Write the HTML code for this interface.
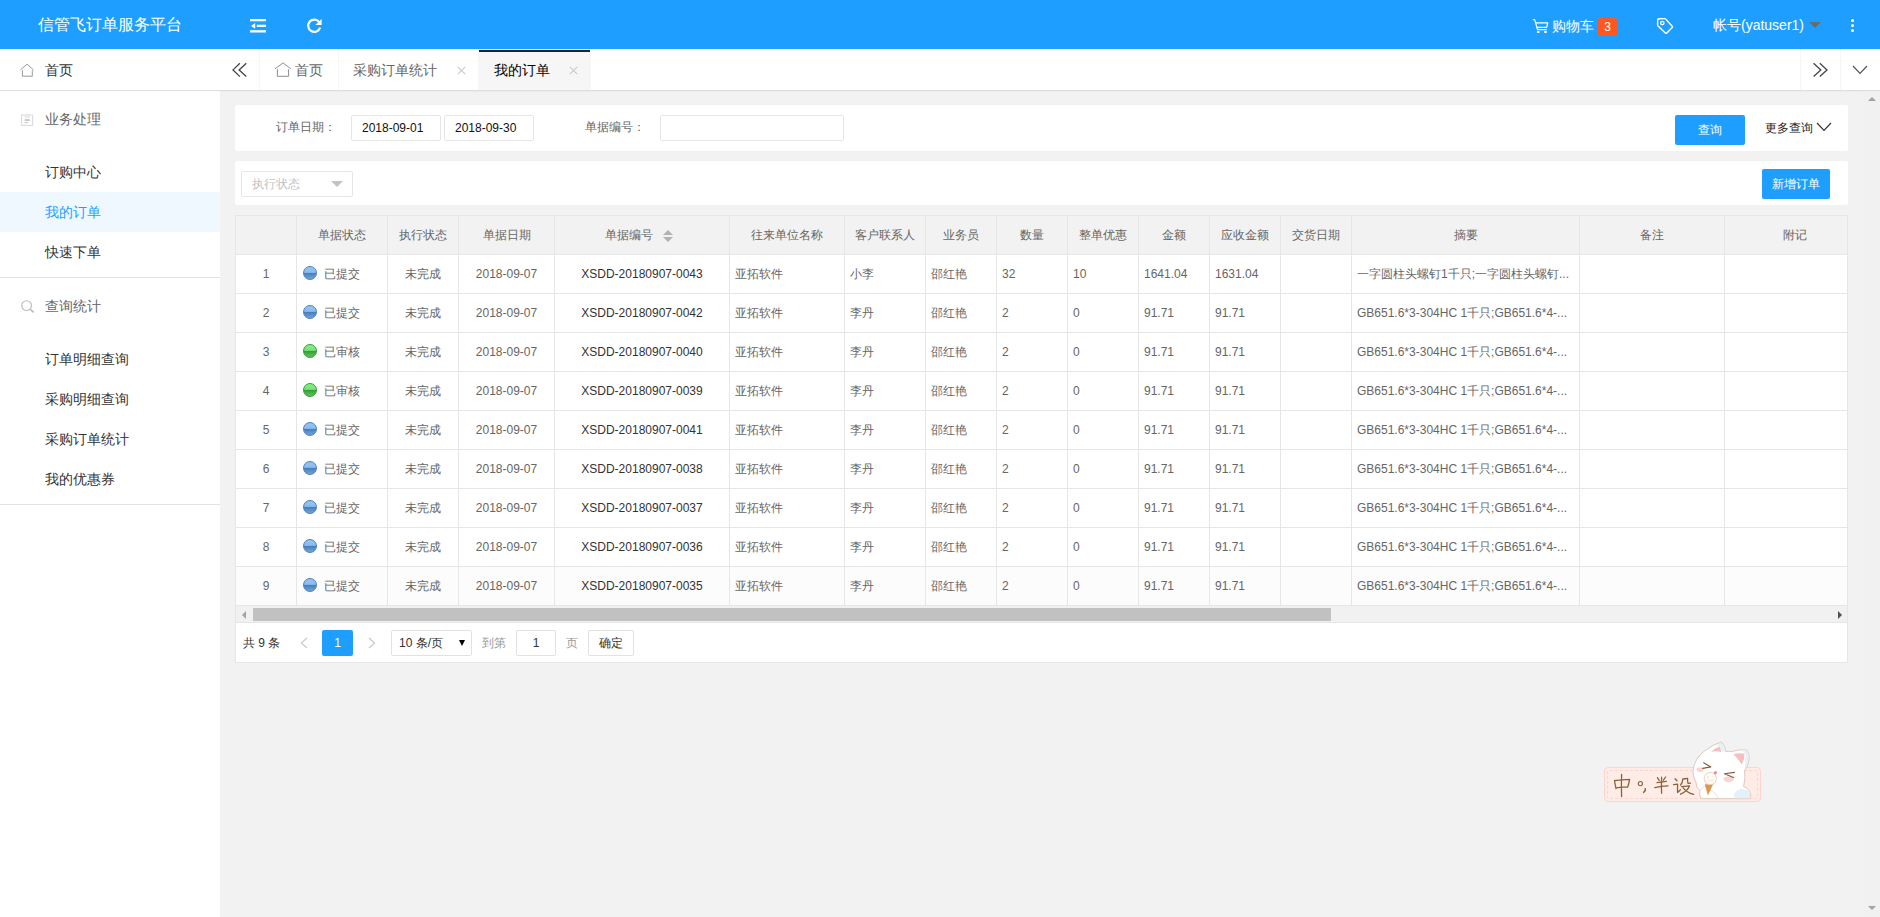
<!DOCTYPE html>
<html><head><meta charset="utf-8"><title>我的订单</title>
<style>
*{box-sizing:border-box;margin:0;padding:0}
html,body{width:1880px;height:917px;overflow:hidden;background:#f2f2f2;font-family:"Liberation Sans",sans-serif;font-size:14px;color:#333}
div,span,svg{position:absolute}
.t{white-space:nowrap}
#hdr{left:0;top:0;width:1880px;height:49px;background:#1E9FFF;color:#fff}
#side{left:0;top:49px;width:220px;height:868px;background:#fff}
#side .it{left:45px;font-size:14px;color:#333;white-space:nowrap;line-height:20px;height:20px}
#side .grp{color:#666}
#side .ln{left:0;width:220px;height:1px;background:#e2e2e2}
#tabs{left:220px;top:49px;width:1660px;height:41px;background:#fff}
#tabs .t{font-size:14px;color:#666;line-height:20px;top:11px}
#tabs .vb{top:0;width:1px;height:41px;background:#f6f6f6}
.card{left:235px;width:1613px;background:#fff;border-radius:2px}
.lbl{font-size:12px;color:#666;white-space:nowrap;line-height:16px}
.inp{height:26px;border:1px solid #e6e6e6;border-radius:2px;background:#fff;font-size:12px;color:#111;line-height:24px;white-space:nowrap}
.btn{background:#1E9FFF;color:#fff;font-size:12px;text-align:center;border-radius:2px;white-space:nowrap}
#tbl{left:235px;top:215px;width:1613px;height:391px;background:#fff;overflow:hidden}
#tbl .hr{left:0;top:0;width:1613px;height:40px;background:#f2f2f2}
#tbl .vl{top:0;width:1px;height:391px;background:#e6e6e6}
#tbl .hl{left:0;width:1613px;height:1px;background:#e6e6e6}
#tbl .c{font-size:12px;color:#666;white-space:nowrap;line-height:16px;height:16px;overflow:hidden}
#tbl .h{text-align:center}
#tbl .ctr{text-align:center}
.ball{width:14px;height:14px;border-radius:50%}
.bb{background:linear-gradient(#93c6fa 0%,#8abaef 45%,#497db6 52%,#5b90ca 75%,#6fa4db 100%);border:1px solid #4a7fbd}
.bg{background:linear-gradient(#88ee88 0%,#7be07b 45%,#379a37 52%,#4ab24a 75%,#5cc45c 100%);border:1px solid #2f9e2f}
#pg{left:235px;top:622px;width:1613px;height:41px;background:#fff;border:1px solid #e6e6e6}
#pg .t{font-size:12px;line-height:16px;top:8px}
#pg .bx{top:7px;height:26px;border:1px solid #e2e2e2;border-radius:2px;background:#fff;font-size:12px;line-height:24px;white-space:nowrap}
</style></head><body>
<div id="hdr">
<div class="t" style="left:38px;top:15px;font-size:16px;line-height:20px">信管飞订单服务平台</div>
<svg style="left:248px;top:16px" width="20" height="20" viewBox="0 0 20 20"><g fill="#fff"><rect x="2" y="3" width="16" height="2.3"/><rect x="8.8" y="8.7" width="9.2" height="2.3"/><rect x="2" y="14.2" width="16" height="2.3"/><path d="M3 9.9 L7.2 7 L7.2 12.8 Z"/></g></svg>
<svg style="left:304px;top:16px" width="20" height="20" viewBox="0 0 20 20"><path d="M15.3 6.2 A6.1 6.1 0 1 0 16.1 11.6" fill="none" stroke="#fff" stroke-width="2.2"/><path d="M17.6 3 L17.6 9 L11.4 9 Z" fill="#fff"/></svg>
<svg style="left:1532px;top:18px" width="17" height="16" viewBox="0 0 17 16"><path d="M0.8 1.5 L2.8 1.8 L5.5 11.7 L14.8 11.7 M3.8 4.8 L15.7 4.8 L14.7 9.3 L5 9.3" fill="none" stroke="#fff" stroke-width="1.2" stroke-linejoin="round"/><rect x="5" y="13" width="2.5" height="2" rx=".6" fill="#fff"/><rect x="12.2" y="13" width="2.5" height="2" rx=".6" fill="#fff"/></svg>
<div class="t" style="left:1552px;top:16px;font-size:14px;line-height:20px">购物车</div>
<div style="left:1598px;top:18px;width:19px;height:18px;background:#FF5722;border-radius:2px;font-size:12px;line-height:18px;text-align:center;color:#fff">3</div>
<svg style="left:1655px;top:16px" width="20" height="20" viewBox="0 0 20 20"><path d="M2.7 4 Q2.7 2.7 4 2.7 L9.6 2.6 Q10.2 2.6 10.7 3.1 L17.2 10.2 Q17.9 10.9 17.2 11.6 L11.8 17 Q11.1 17.7 10.4 17 L3 9.9 Q2.6 9.5 2.6 9 Z" fill="none" stroke="#fff" stroke-width="1.4" stroke-linejoin="round"/><circle cx="7.3" cy="7" r="1.7" fill="none" stroke="#fff" stroke-width="1.3"/></svg>
<div class="t" style="left:1713px;top:15px;font-size:14px;line-height:20px">帐号(yatuser1)</div>
<div style="left:1809px;top:22px;width:0;height:0;border-left:6px solid transparent;border-right:6px solid transparent;border-top:6px solid #6b6b6b"></div>
<div style="left:1850.5px;top:19px;width:3px;height:3px;background:#fff;border-radius:2px"></div><div style="left:1850.5px;top:24px;width:3px;height:3px;background:#fff;border-radius:2px"></div><div style="left:1850.5px;top:29px;width:3px;height:3px;background:#fff;border-radius:2px"></div>
</div>
<div id="side">
<svg style="left:20px;top:14px" width="15" height="15" viewBox="0 0 15 15"><path d="M0.5 6.9 L7 1.2 L13.6 6.9 M2.4 7.2 L2.4 13.2 L12.3 13.2 L12.3 7.2" fill="none" stroke="#999" stroke-width="1"/></svg>
<div class="it" style="top:11px">首页</div>
<div class="ln" style="top:41px;background:#ddd"></div>
<svg style="left:20px;top:63px" width="14" height="14" viewBox="0 0 14 14"><rect x="1.6" y="3" width="11" height="10.4" fill="none" stroke="#dcdcdc" stroke-width="1.1"/><path d="M5 5.2 L5.6 3.5 L6.3 3.5 L7.2 2.3 L8.1 3.5 L8.8 3.5 L9.4 5.2 Z" fill="#fff" stroke="#d4d4d4" stroke-width=".8"/><rect x="4.6" y="7.2" width="5.2" height="1.7" fill="#c4c4c4"/><rect x="4.6" y="10.1" width="3.5" height="1" fill="#c4c4c4"/></svg>
<div class="it grp" style="top:60px">业务处理</div>
<div class="it" style="top:113px">订购中心</div>
<div style="left:0;top:143px;width:220px;height:40px;background:#f0f8ff"></div>
<div class="it" style="top:153px;color:#1E9FFF">我的订单</div>
<div class="it" style="top:193px">快速下单</div>
<div class="ln" style="top:228px"></div>
<svg style="left:20px;top:250px" width="15" height="15" viewBox="0 0 15 15"><circle cx="6.6" cy="6.6" r="4.9" fill="none" stroke="#bbb" stroke-width="1.1"/><path d="M10.4 10.4 L13.6 13.4" stroke="#bbb" stroke-width="1.6"/></svg>
<div class="it grp" style="top:247px">查询统计</div>
<div class="it" style="top:300px">订单明细查询</div>
<div class="it" style="top:340px">采购明细查询</div>
<div class="it" style="top:380px">采购订单统计</div>
<div class="it" style="top:420px">我的优惠券</div>
<div class="ln" style="top:455px"></div>
</div>
<div id="tabs">
<svg style="left:12px;top:13px" width="18" height="16" viewBox="0 0 18 16"><path d="M7.9 1.3 L1 7.9 L7.9 14.6 M14.3 1.3 L7.1 7.9 L14.3 14.6" fill="none" stroke="#444" stroke-width="1.3"/></svg>
<div class="vb" style="left:39px"></div>
<svg style="left:54px;top:12px" width="18" height="17" viewBox="0 0 18 17"><path d="M1 7.8 L9.1 1.9 L16.8 7.8 M3.4 8.2 L3.4 15.3 L14.6 15.3 L14.6 8.2" fill="none" stroke="#8e8e8e" stroke-width="1"/></svg>
<div class="t" style="left:75px">首页</div>
<div class="vb" style="left:118px"></div>
<div class="t" style="left:133px">采购订单统计</div>
<svg style="left:237.4px;top:16.7px" width="9" height="9" viewBox="0 0 9 9"><path d="M0.8 0.8 L8.2 8.2 M8.2 0.8 L0.8 8.2" stroke="#c9c9c9" stroke-width="1.1"/></svg>
<div style="left:258px;top:0;width:113px;height:41px;background:#f6f6f6"></div>
<div style="left:259px;top:1px;width:111px;height:2px;background:#20222A"></div>
<div class="t" style="left:274px;color:#000">我的订单</div>
<svg style="left:349.4px;top:16.7px" width="9" height="9" viewBox="0 0 9 9"><path d="M0.8 0.8 L8.2 8.2 M8.2 0.8 L0.8 8.2" stroke="#c9c9c9" stroke-width="1.1"/></svg>
<div class="vb" style="left:1580px"></div>
<svg style="left:1592px;top:13px" width="18" height="16" viewBox="0 0 18 16"><path d="M1.6 1.3 L8.8 7.9 L1.6 14.6 M7.8 1.3 L15 7.9 L7.8 14.6" fill="none" stroke="#444" stroke-width="1.3"/></svg>
<div class="vb" style="left:1620px"></div>
<svg style="left:1632px;top:16px" width="16" height="10" viewBox="0 0 16 10"><path d="M1 1 L8 8.4 L15 1" fill="none" stroke="#555" stroke-width="1.2"/></svg>
</div>
<div style="left:0;top:49px;width:1880px;height:1px;background:rgba(0,0,0,.05)"></div>
<div style="left:220px;top:90px;width:1660px;height:1px;background:#dedede"></div>
<div style="left:220px;top:91px;width:1660px;height:1px;background:#ebebeb"></div>
<div style="left:1863px;top:92px;width:17px;height:825px;background:#f1f1f1"></div>
<div style="left:1868px;top:97px;width:0;height:0;border-left:4px solid transparent;border-right:4px solid transparent;border-bottom:4px solid #a3a3a3"></div>
<div style="left:1868px;top:906px;width:0;height:0;border-left:4px solid transparent;border-right:4px solid transparent;border-top:4px solid #a3a3a3"></div>
<div class="card" style="top:105px;height:46px">
<div class="lbl" style="left:41px;top:14px">订单日期：</div>
<div class="inp" style="left:116px;top:10px;width:90px;padding-left:10px">2018-09-01</div>
<div class="inp" style="left:209px;top:10px;width:90px;padding-left:10px">2018-09-30</div>
<div class="lbl" style="left:350px;top:14px">单据编号：</div>
<div class="inp" style="left:425px;top:10px;width:184px"></div>
<div class="btn" style="left:1440px;top:10px;width:70px;height:30px;line-height:30px">查询</div>
<div class="lbl" style="left:1530px;top:15px;color:#222">更多查询</div>
<svg style="left:1581px;top:17px" width="16" height="10" viewBox="0 0 16 10"><path d="M1 1 L8 8.4 L15 1" fill="none" stroke="#333" stroke-width="1.2"/></svg>
</div>
<div class="card" style="top:161px;height:44px">
<div class="inp" style="left:6px;top:10px;width:112px;padding-left:10px;color:#c2c2c2">执行状态</div>
<div style="left:96px;top:20px;width:0;height:0;border-left:6px solid transparent;border-right:6px solid transparent;border-top:6px solid #c2c2c2"></div>
<div class="btn" style="left:1527px;top:8px;width:68px;height:30px;line-height:30px">新增订单</div>
</div>
<div id="tbl">
<div class="hr"></div>
<div class="vl" style="left:0px"></div><div class="vl" style="left:61px"></div><div class="vl" style="left:152px"></div><div class="vl" style="left:223px"></div><div class="vl" style="left:319px"></div><div class="vl" style="left:494px"></div><div class="vl" style="left:609px"></div><div class="vl" style="left:690px"></div><div class="vl" style="left:761px"></div><div class="vl" style="left:832px"></div><div class="vl" style="left:903px"></div><div class="vl" style="left:974px"></div><div class="vl" style="left:1045px"></div><div class="vl" style="left:1116px"></div><div class="vl" style="left:1344px"></div><div class="vl" style="left:1489px"></div><div class="vl" style="left:1612px"></div>
<div class="hl" style="top:0"></div><div class="hl" style="top:39px"></div><div class="hl" style="top:78px"></div><div class="hl" style="top:117px"></div><div class="hl" style="top:156px"></div><div class="hl" style="top:195px"></div><div class="hl" style="top:234px"></div><div class="hl" style="top:273px"></div><div class="hl" style="top:312px"></div><div class="hl" style="top:351px"></div><div class="hl" style="top:390px"></div>
<div class="c h" style="left:62px;top:12px;width:90px">单据状态</div><div class="c h" style="left:153px;top:12px;width:70px">执行状态</div><div class="c h" style="left:224px;top:12px;width:95px">单据日期</div><div class="c" style="left:370px;top:12px">单据编号</div><div style="left:428px;top:15px;width:0;height:0;border-left:5px solid transparent;border-right:5px solid transparent;border-bottom:5px solid #b2b2b2"></div><div style="left:428px;top:22px;width:0;height:0;border-left:5px solid transparent;border-right:5px solid transparent;border-top:5px solid #b2b2b2"></div><div class="c h" style="left:495px;top:12px;width:114px">往来单位名称</div><div class="c h" style="left:610px;top:12px;width:80px">客户联系人</div><div class="c h" style="left:691px;top:12px;width:70px">业务员</div><div class="c h" style="left:762px;top:12px;width:70px">数量</div><div class="c h" style="left:833px;top:12px;width:70px">整单优惠</div><div class="c h" style="left:904px;top:12px;width:70px">金额</div><div class="c h" style="left:975px;top:12px;width:70px">应收金额</div><div class="c h" style="left:1046px;top:12px;width:70px">交货日期</div><div class="c h" style="left:1117px;top:12px;width:227px">摘要</div><div class="c h" style="left:1345px;top:12px;width:144px">备注</div><div class="c" style="left:1548px;top:12px">附记</div>
<div class="c ctr" style="left:1px;top:51px;width:60px">1</div><div class="ball bb" style="left:68px;top:51px"></div><div class="c" style="left:89px;top:51px">已提交</div><div class="c ctr" style="left:153px;top:51px;width:70px">未完成</div><div class="c ctr" style="left:224px;top:51px;width:95px">2018-09-07</div><div class="c ctr" style="left:320px;top:51px;width:174px;color:#333">XSDD-20180907-0043</div><div class="c" style="left:495px;top:51px;width:114px;padding-left:5px">亚拓软件</div><div class="c" style="left:610px;top:51px;width:80px;padding-left:5px">小李</div><div class="c" style="left:691px;top:51px;width:70px;padding-left:5px">邵红艳</div><div class="c" style="left:762px;top:51px;width:70px;padding-left:5px">32</div><div class="c" style="left:833px;top:51px;width:70px;padding-left:5px">10</div><div class="c" style="left:904px;top:51px;width:70px;padding-left:5px">1641.04</div><div class="c" style="left:975px;top:51px;width:70px;padding-left:5px">1631.04</div><div class="c" style="left:1117px;top:51px;width:227px;padding-left:5px">一字圆柱头螺钉1千只;一字圆柱头螺钉...</div>
<div class="c ctr" style="left:1px;top:90px;width:60px">2</div><div class="ball bb" style="left:68px;top:90px"></div><div class="c" style="left:89px;top:90px">已提交</div><div class="c ctr" style="left:153px;top:90px;width:70px">未完成</div><div class="c ctr" style="left:224px;top:90px;width:95px">2018-09-07</div><div class="c ctr" style="left:320px;top:90px;width:174px;color:#333">XSDD-20180907-0042</div><div class="c" style="left:495px;top:90px;width:114px;padding-left:5px">亚拓软件</div><div class="c" style="left:610px;top:90px;width:80px;padding-left:5px">李丹</div><div class="c" style="left:691px;top:90px;width:70px;padding-left:5px">邵红艳</div><div class="c" style="left:762px;top:90px;width:70px;padding-left:5px">2</div><div class="c" style="left:833px;top:90px;width:70px;padding-left:5px">0</div><div class="c" style="left:904px;top:90px;width:70px;padding-left:5px">91.71</div><div class="c" style="left:975px;top:90px;width:70px;padding-left:5px">91.71</div><div class="c" style="left:1117px;top:90px;width:227px;padding-left:5px">GB651.6*3-304HC 1千只;GB651.6*4-...</div>
<div class="c ctr" style="left:1px;top:129px;width:60px">3</div><div class="ball bg" style="left:68px;top:129px"></div><div class="c" style="left:89px;top:129px">已审核</div><div class="c ctr" style="left:153px;top:129px;width:70px">未完成</div><div class="c ctr" style="left:224px;top:129px;width:95px">2018-09-07</div><div class="c ctr" style="left:320px;top:129px;width:174px;color:#333">XSDD-20180907-0040</div><div class="c" style="left:495px;top:129px;width:114px;padding-left:5px">亚拓软件</div><div class="c" style="left:610px;top:129px;width:80px;padding-left:5px">李丹</div><div class="c" style="left:691px;top:129px;width:70px;padding-left:5px">邵红艳</div><div class="c" style="left:762px;top:129px;width:70px;padding-left:5px">2</div><div class="c" style="left:833px;top:129px;width:70px;padding-left:5px">0</div><div class="c" style="left:904px;top:129px;width:70px;padding-left:5px">91.71</div><div class="c" style="left:975px;top:129px;width:70px;padding-left:5px">91.71</div><div class="c" style="left:1117px;top:129px;width:227px;padding-left:5px">GB651.6*3-304HC 1千只;GB651.6*4-...</div>
<div class="c ctr" style="left:1px;top:168px;width:60px">4</div><div class="ball bg" style="left:68px;top:168px"></div><div class="c" style="left:89px;top:168px">已审核</div><div class="c ctr" style="left:153px;top:168px;width:70px">未完成</div><div class="c ctr" style="left:224px;top:168px;width:95px">2018-09-07</div><div class="c ctr" style="left:320px;top:168px;width:174px;color:#333">XSDD-20180907-0039</div><div class="c" style="left:495px;top:168px;width:114px;padding-left:5px">亚拓软件</div><div class="c" style="left:610px;top:168px;width:80px;padding-left:5px">李丹</div><div class="c" style="left:691px;top:168px;width:70px;padding-left:5px">邵红艳</div><div class="c" style="left:762px;top:168px;width:70px;padding-left:5px">2</div><div class="c" style="left:833px;top:168px;width:70px;padding-left:5px">0</div><div class="c" style="left:904px;top:168px;width:70px;padding-left:5px">91.71</div><div class="c" style="left:975px;top:168px;width:70px;padding-left:5px">91.71</div><div class="c" style="left:1117px;top:168px;width:227px;padding-left:5px">GB651.6*3-304HC 1千只;GB651.6*4-...</div>
<div class="c ctr" style="left:1px;top:207px;width:60px">5</div><div class="ball bb" style="left:68px;top:207px"></div><div class="c" style="left:89px;top:207px">已提交</div><div class="c ctr" style="left:153px;top:207px;width:70px">未完成</div><div class="c ctr" style="left:224px;top:207px;width:95px">2018-09-07</div><div class="c ctr" style="left:320px;top:207px;width:174px;color:#333">XSDD-20180907-0041</div><div class="c" style="left:495px;top:207px;width:114px;padding-left:5px">亚拓软件</div><div class="c" style="left:610px;top:207px;width:80px;padding-left:5px">李丹</div><div class="c" style="left:691px;top:207px;width:70px;padding-left:5px">邵红艳</div><div class="c" style="left:762px;top:207px;width:70px;padding-left:5px">2</div><div class="c" style="left:833px;top:207px;width:70px;padding-left:5px">0</div><div class="c" style="left:904px;top:207px;width:70px;padding-left:5px">91.71</div><div class="c" style="left:975px;top:207px;width:70px;padding-left:5px">91.71</div><div class="c" style="left:1117px;top:207px;width:227px;padding-left:5px">GB651.6*3-304HC 1千只;GB651.6*4-...</div>
<div class="c ctr" style="left:1px;top:246px;width:60px">6</div><div class="ball bb" style="left:68px;top:246px"></div><div class="c" style="left:89px;top:246px">已提交</div><div class="c ctr" style="left:153px;top:246px;width:70px">未完成</div><div class="c ctr" style="left:224px;top:246px;width:95px">2018-09-07</div><div class="c ctr" style="left:320px;top:246px;width:174px;color:#333">XSDD-20180907-0038</div><div class="c" style="left:495px;top:246px;width:114px;padding-left:5px">亚拓软件</div><div class="c" style="left:610px;top:246px;width:80px;padding-left:5px">李丹</div><div class="c" style="left:691px;top:246px;width:70px;padding-left:5px">邵红艳</div><div class="c" style="left:762px;top:246px;width:70px;padding-left:5px">2</div><div class="c" style="left:833px;top:246px;width:70px;padding-left:5px">0</div><div class="c" style="left:904px;top:246px;width:70px;padding-left:5px">91.71</div><div class="c" style="left:975px;top:246px;width:70px;padding-left:5px">91.71</div><div class="c" style="left:1117px;top:246px;width:227px;padding-left:5px">GB651.6*3-304HC 1千只;GB651.6*4-...</div>
<div class="c ctr" style="left:1px;top:285px;width:60px">7</div><div class="ball bb" style="left:68px;top:285px"></div><div class="c" style="left:89px;top:285px">已提交</div><div class="c ctr" style="left:153px;top:285px;width:70px">未完成</div><div class="c ctr" style="left:224px;top:285px;width:95px">2018-09-07</div><div class="c ctr" style="left:320px;top:285px;width:174px;color:#333">XSDD-20180907-0037</div><div class="c" style="left:495px;top:285px;width:114px;padding-left:5px">亚拓软件</div><div class="c" style="left:610px;top:285px;width:80px;padding-left:5px">李丹</div><div class="c" style="left:691px;top:285px;width:70px;padding-left:5px">邵红艳</div><div class="c" style="left:762px;top:285px;width:70px;padding-left:5px">2</div><div class="c" style="left:833px;top:285px;width:70px;padding-left:5px">0</div><div class="c" style="left:904px;top:285px;width:70px;padding-left:5px">91.71</div><div class="c" style="left:975px;top:285px;width:70px;padding-left:5px">91.71</div><div class="c" style="left:1117px;top:285px;width:227px;padding-left:5px">GB651.6*3-304HC 1千只;GB651.6*4-...</div>
<div class="c ctr" style="left:1px;top:324px;width:60px">8</div><div class="ball bb" style="left:68px;top:324px"></div><div class="c" style="left:89px;top:324px">已提交</div><div class="c ctr" style="left:153px;top:324px;width:70px">未完成</div><div class="c ctr" style="left:224px;top:324px;width:95px">2018-09-07</div><div class="c ctr" style="left:320px;top:324px;width:174px;color:#333">XSDD-20180907-0036</div><div class="c" style="left:495px;top:324px;width:114px;padding-left:5px">亚拓软件</div><div class="c" style="left:610px;top:324px;width:80px;padding-left:5px">李丹</div><div class="c" style="left:691px;top:324px;width:70px;padding-left:5px">邵红艳</div><div class="c" style="left:762px;top:324px;width:70px;padding-left:5px">2</div><div class="c" style="left:833px;top:324px;width:70px;padding-left:5px">0</div><div class="c" style="left:904px;top:324px;width:70px;padding-left:5px">91.71</div><div class="c" style="left:975px;top:324px;width:70px;padding-left:5px">91.71</div><div class="c" style="left:1117px;top:324px;width:227px;padding-left:5px">GB651.6*3-304HC 1千只;GB651.6*4-...</div>
<div style="left:1px;top:352px;width:1611px;height:38px;background:#fcfcfc"></div><div style="left:61px;top:352px;width:1px;height:38px;background:#e6e6e6"></div><div style="left:152px;top:352px;width:1px;height:38px;background:#e6e6e6"></div><div style="left:223px;top:352px;width:1px;height:38px;background:#e6e6e6"></div><div style="left:319px;top:352px;width:1px;height:38px;background:#e6e6e6"></div><div style="left:494px;top:352px;width:1px;height:38px;background:#e6e6e6"></div><div style="left:609px;top:352px;width:1px;height:38px;background:#e6e6e6"></div><div style="left:690px;top:352px;width:1px;height:38px;background:#e6e6e6"></div><div style="left:761px;top:352px;width:1px;height:38px;background:#e6e6e6"></div><div style="left:832px;top:352px;width:1px;height:38px;background:#e6e6e6"></div><div style="left:903px;top:352px;width:1px;height:38px;background:#e6e6e6"></div><div style="left:974px;top:352px;width:1px;height:38px;background:#e6e6e6"></div><div style="left:1045px;top:352px;width:1px;height:38px;background:#e6e6e6"></div><div style="left:1116px;top:352px;width:1px;height:38px;background:#e6e6e6"></div><div style="left:1344px;top:352px;width:1px;height:38px;background:#e6e6e6"></div><div style="left:1489px;top:352px;width:1px;height:38px;background:#e6e6e6"></div><div class="c ctr" style="left:1px;top:363px;width:60px">9</div><div class="ball bb" style="left:68px;top:363px"></div><div class="c" style="left:89px;top:363px">已提交</div><div class="c ctr" style="left:153px;top:363px;width:70px">未完成</div><div class="c ctr" style="left:224px;top:363px;width:95px">2018-09-07</div><div class="c ctr" style="left:320px;top:363px;width:174px;color:#333">XSDD-20180907-0035</div><div class="c" style="left:495px;top:363px;width:114px;padding-left:5px">亚拓软件</div><div class="c" style="left:610px;top:363px;width:80px;padding-left:5px">李丹</div><div class="c" style="left:691px;top:363px;width:70px;padding-left:5px">邵红艳</div><div class="c" style="left:762px;top:363px;width:70px;padding-left:5px">2</div><div class="c" style="left:833px;top:363px;width:70px;padding-left:5px">0</div><div class="c" style="left:904px;top:363px;width:70px;padding-left:5px">91.71</div><div class="c" style="left:975px;top:363px;width:70px;padding-left:5px">91.71</div><div class="c" style="left:1117px;top:363px;width:227px;padding-left:5px">GB651.6*3-304HC 1千只;GB651.6*4-...</div>
</div>
<div style="left:235px;top:606px;width:1613px;height:17px;background:#f1f1f1;border-left:1px solid #e6e6e6;border-right:1px solid #e6e6e6"></div>
<div style="left:253px;top:608px;width:1078px;height:13px;background:#c1c1c1"></div>
<div style="left:242px;top:611px;width:0;height:0;border-top:4px solid transparent;border-bottom:4px solid transparent;border-right:4px solid #a3a3a3"></div>
<div style="left:1838px;top:611px;width:0;height:0;border-top:4px solid transparent;border-bottom:4px solid transparent;border-left:4px solid #505050"></div>
<div id="pg">
<div class="t" style="left:7px;top:12px;color:#333">共 9 条</div>
<svg style="left:64px;top:14px" width="8" height="12" viewBox="0 0 8 12"><path d="M7 1 L1.4 6 L7 11" fill="none" stroke="#cacaca" stroke-width="1.2"/></svg>
<div style="left:86px;top:7px;width:31px;height:26px;background:#1E9FFF;border-radius:2px;color:#fff;font-size:12px;line-height:26px;text-align:center">1</div>
<svg style="left:132px;top:14px" width="8" height="12" viewBox="0 0 8 12"><path d="M1 1 L6.6 6 L1 11" fill="none" stroke="#c8c8c8" stroke-width="1.2"/></svg>
<div class="bx" style="left:155px;width:81px;padding-left:7px;color:#333">10 条/页</div>
<div style="left:223px;top:17px;width:0;height:0;border-left:3.5px solid transparent;border-right:3.5px solid transparent;border-top:6px solid #000"></div>
<div class="t" style="left:246px;top:12px;color:#999">到第</div>
<div class="bx" style="left:280px;width:40px;text-align:center;color:#333">1</div>
<div class="t" style="left:330px;top:12px;color:#999">页</div>
<div class="bx" style="left:352px;width:46px;text-align:center;color:#333">确定</div>
</div>
<div style="left:1604px;top:767px;width:157px;height:35px;background:#ffece6;border:1px solid #ffd3cf;border-radius:4px"></div>
<div style="left:1607px;top:770px;width:151px;height:29px;border:1px dashed #fbd5d0;border-radius:3px"></div>
<svg style="left:1604px;top:767px" width="100" height="35" viewBox="1604 767 100 35"><g fill="none" stroke="#8a6238" stroke-width="1.3" stroke-linecap="round" stroke-linejoin="round"><path d="M1614.5 780.5 Q1615 784 1616 788.5 M1614.5 780.6 Q1622 779.6 1629.6 779.4 Q1629 783.5 1627.6 787.2 M1616.2 787.8 Q1622 786.8 1627.8 786.8 M1621.6 774.4 Q1621.2 786 1621.6 796.6"/><circle cx="1640.4" cy="783.6" r="2.1" stroke-width="1.1"/><path d="M1645.2 788.6 Q1646 790.6 1643.6 792.4" stroke-width="1.4"/><path d="M1657.4 777.6 L1659.2 780.4 M1665.6 777 L1663.4 780.2 M1657 782.6 L1666.4 781.4 M1654.8 787.6 Q1661 786 1668 785.8 M1661.6 777.2 Q1661.2 786 1661.6 793.2"/><path d="M1675 778.8 L1677 780.8 M1673.6 784.6 L1677.6 784.2 Q1677.4 789 1677.6 792.4 L1680.4 789.8 M1682.8 779.2 Q1682.6 782.6 1680.6 785 M1682.8 779 L1687.6 778.4 Q1687.4 781.6 1688 783.4 L1690.4 783.2 M1681.6 786.6 L1689.6 785.8 Q1687.6 791 1680.6 794.2 M1683.2 787.8 Q1686.6 792.4 1693.6 794.4"/></g></svg>
<svg style="left:1690px;top:740px" width="64" height="62" viewBox="0 0 64 62"><path d="M3 30.4 Q5 18 14.2 11.2 Q22 5 31.4 1.9 Q35.5 6 35.9 11.7 Q38.6 10.6 41.5 11.7 Q49 8.6 57.1 10.2 Q60.4 15 58.7 21.5 Q57.4 27 54.6 30.4 Q55.6 39 53.6 46.6 Q59.4 48.6 60.4 53.8 Q61.2 57 60 58.7 L11.4 58.7 Q8.6 55 10 50.6 Q5.6 47.4 6.1 42.6 Q2.6 37 3 30.4 Z" fill="#fff" stroke="#dcc3b2" stroke-width=".9"/><path d="M27 5 L31.4 2.4 Q34.6 6 35.2 11.6 L33 11.2 Z" fill="#e4f0fa"/><path d="M50 9.6 L56.8 10.6 Q59.6 15 58 21.4 Q57 26 54.8 29.6 L55.6 14 Z" fill="#e4f0fa"/><path d="M20.8 11.9 Q25 7.6 29.4 6.7 Q31 9 31.4 11.9 Q26 10.6 20.8 11.9 Z" fill="#f8bdbd"/><path d="M43.5 14.3 Q49 12.6 54.6 13.7 Q54.6 20 51.6 24.4 Q48 18.6 43.5 14.3 Z" fill="#f8bdbd"/><ellipse cx="10.2" cy="29.6" rx="3.6" ry="2.3" fill="#fbd3d3"/><ellipse cx="38.6" cy="39.2" rx="5" ry="2.8" fill="#fbd3d3"/><path d="M13.7 22.8 L20.8 26.9 L12.7 28.4 M44.5 32.4 L34.4 33.7 L43.5 37.5" fill="none" stroke="#8a5a3a" stroke-width="1.1" stroke-linecap="round" stroke-linejoin="round"/><path d="M48.6 49.4 Q55 47.4 59.6 52 Q60.6 56 59.6 58.2 L44 58.2 Q43 52 48.6 49.4 Z" fill="#e4f0fa"/><path d="M10 50.6 Q14 44.6 20 46 M28 58.4 Q26 52 20 50" fill="none" stroke="#e6d3c6" stroke-width=".7"/><path d="M15 44.4 L22.9 44.2 L18 54.8 Z" fill="#d9984e" stroke="#c98a42" stroke-width=".4"/><circle cx="20.3" cy="38.6" r="6.2" fill="#fffaf3" stroke="#dcc6ac" stroke-width=".7"/><circle cx="18" cy="37" r=".5" fill="#d9a25e"/><circle cx="22" cy="40.6" r=".5" fill="#d9a25e"/><circle cx="19.6" cy="41" r=".4" fill="#e9b5b5"/><ellipse cx="25.4" cy="32.8" rx="1.6" ry="1.8" fill="#f08c8c"/></svg>
</body></html>
